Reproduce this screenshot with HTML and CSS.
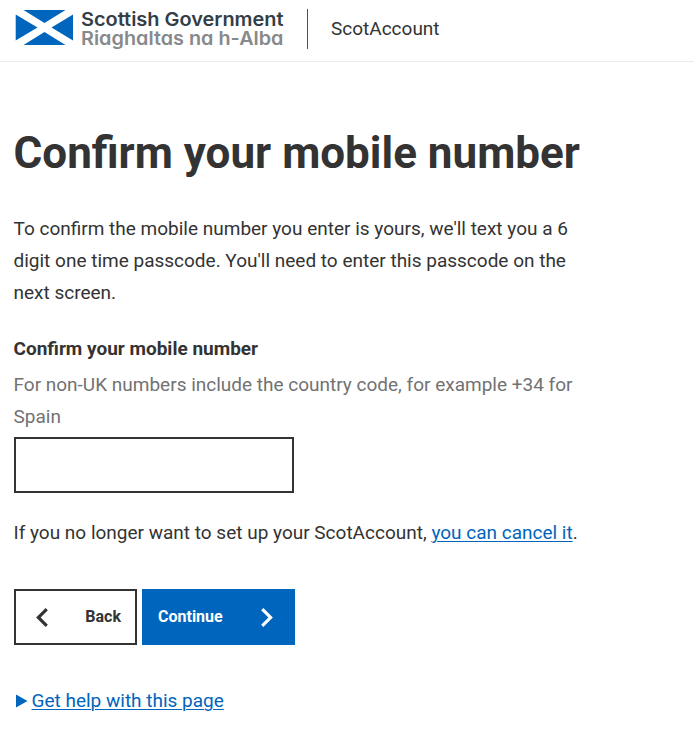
FILE: index.html
```html
<!DOCTYPE html>
<html lang="en">
<head>
<meta charset="utf-8">
<title>Confirm your mobile number - ScotAccount</title>
<link rel="stylesheet" href="styles.css">
</head>
<body>
<header class="site-header">
  <a class="brand" href="#">
    <svg class="flag" viewBox="0 0 58 35" aria-hidden="true"><path fill="#0065bd" d="M8.500 0h42L29.500 13zM8.500 35h42L29.500 22zM0.700 4.500v26L22.500 17.500zM58 4.500v26L36.500 17.500z"/></svg>
    <svg class="wordmark" viewBox="0 0 206 40" role="img" aria-label="Scottish Government">
      <text class="wm-en" x="0" y="16.5" textLength="202.500" lengthAdjust="spacingAndGlyphs">Scottish Government</text>
      <text class="wm-gd" x="0" y="35.5" textLength="202.500" lengthAdjust="spacingAndGlyphs">Riaghaltas na h-Alba</text>
    </svg>
  </a>
  <span class="service">ScotAccount</span>
</header>
<main class="content">
  <h1>Confirm your mobile number</h1>
  <p class="intro">To confirm the mobile number you enter is yours, we'll text you a 6 digit one time passcode. You'll need to enter this passcode on the next screen.</p>
  <form>
    <label for="mobile">Confirm your mobile number</label>
    <p class="hint">For non-UK numbers include the country code, for example +34 for Spain</p>
    <input id="mobile" type="tel">
    <p class="cancel">If you no longer want to set up your ScotAccount, <a href="#">you can cancel it</a>.</p>
    <div class="buttons">
      <button class="btn back" type="button"><svg viewBox="8 6 7.4 12"><path d="M15.4 7.4L14 6l-6 6 6 6 1.4-1.4L10.8 12z"/></svg>Back</button>
      <button class="btn next" type="button">Continue<svg viewBox="8.6 6 7.4 12"><path d="M10 6L8.6 7.4l4.6 4.6-4.6 4.6L10 18l6-6z"/></svg></button>
    </div>
  </form>
  <a class="help" href="#"><svg viewBox="0 0 12 14"><path d="M0 0.5l11.5 6.5-11.5 6.5z"/></svg><span>Get help with this page</span></a>
</main>
</body>
</html>
```
FILE: styles.css
```css
* { box-sizing: border-box; }
body { margin: 0; background: #fff; color: #333; font: 19px/32px Roboto, sans-serif; }
a { color: #0065bd; text-decoration-thickness: 1px; text-underline-offset: 2px; }
p { margin: 0; }
.site-header { display: flex; height: 62px; padding: 9px 15px 0; border-bottom: 1px solid #ebebeb; }
.brand { display: flex; gap: 8px; width: 293px; height: 40px; border-right: 1px solid #0065bd; }
.flag { width: 58px; height: 35px; margin-top: 1px; flex: none; }
.wordmark { width: 206px; height: 40px; flex: none; }
.wm-en, .wm-gd { font-family: Inter, sans-serif; font-size: 19px; font-weight: 600; font-feature-settings: "cv11"; fill: #333e48; }
.wm-gd { fill: #87898b; }
.service { margin: 4px 0 0 23px; }
.content { width: 580px; padding-left: 13.5px; }
h1 { margin: 67px 0 36px; font-size: 44px; line-height: 48px; font-weight: 700; white-space: nowrap; }
.intro { margin-bottom: 24px; }
label { display: block; font-weight: 700; margin-bottom: 4px; }
.hint { color: #727272; }
input { display: block; width: 280px; height: 56px; margin: 4px 0 24px; border: 2px solid #333; background: #fff; }
.cancel { white-space: nowrap; }
.buttons { display: flex; gap: 5px; margin: 40px 0 40px 0.5px; }
.btn { display: flex; align-items: center; justify-content: space-between; height: 56px; padding: 0 14px 0 19.5px; border: 2px solid #333; font: 700 16px/32px Roboto, sans-serif; }
.btn svg { width: 12px; height: 19px; fill: currentColor; }
.back { width: 123px; background: #fff; color: #333; }
.next { width: 153px; padding: 0 20px 0 14px; background: #0065bd; border-color: #0065bd; color: #fff; }
.help { display: inline-flex; align-items: center; gap: 4px; text-decoration: none; margin-left: 2px; }
.help svg { width: 12px; height: 14px; fill: #0065bd; }
.help span { text-decoration: underline; text-decoration-thickness: 1px; text-underline-offset: 2px; }
```
